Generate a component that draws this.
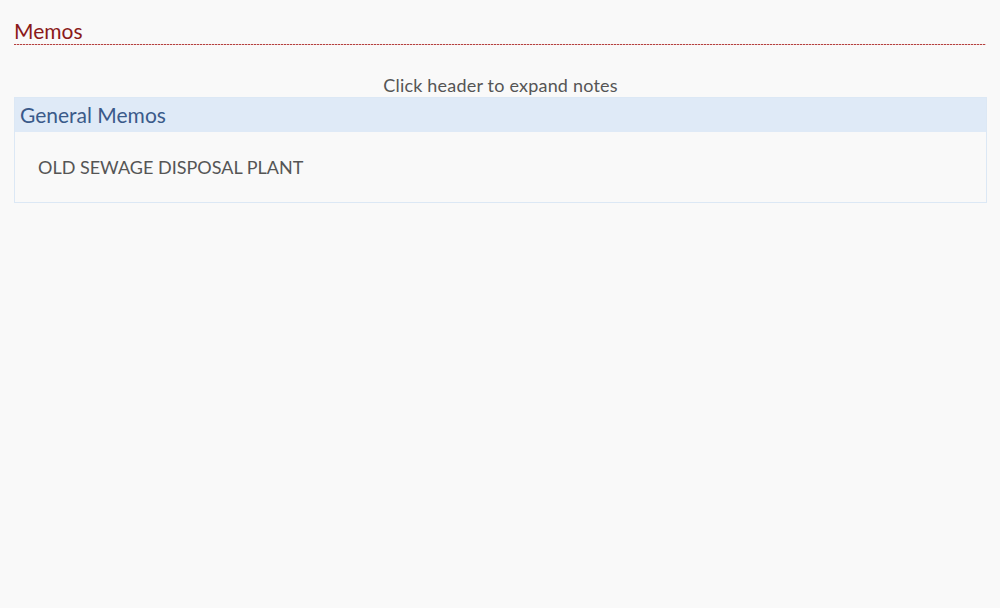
export default function App() {
  return (
    <div className="min-h-[608px] w-full bg-[#f9f9f9] pl-[14px] pr-[13px] pt-[17px] font-['Lato',sans-serif]">
      <h1 className="mr-px text-[21px] leading-[27px] text-[#8b1a1a]">Memos</h1>
      <div className="mr-px h-px bg-[repeating-linear-gradient(90deg,#b5403e_0px,#b5403e_2px,#e8c4c4_2px,#e8c4c4_3px)]" />
      <p className="mt-[29px] text-center text-[18px] leading-[23px] tracking-[0.2px] text-[#555]">
        Click header to expand notes
      </p>
      <div className="border border-[#dce8f5]">
        <div className="h-[34px] bg-[#dfeaf7] px-[5px] text-[21px] leading-[34px] text-[#3a5a8a]">
          General Memos
        </div>
        <div className="px-[23px] pt-[24px] pb-[24px] text-[18px] leading-[22px] text-[#555]">
          OLD SEWAGE DISPOSAL PLANT
        </div>
      </div>
    </div>
  );
}
